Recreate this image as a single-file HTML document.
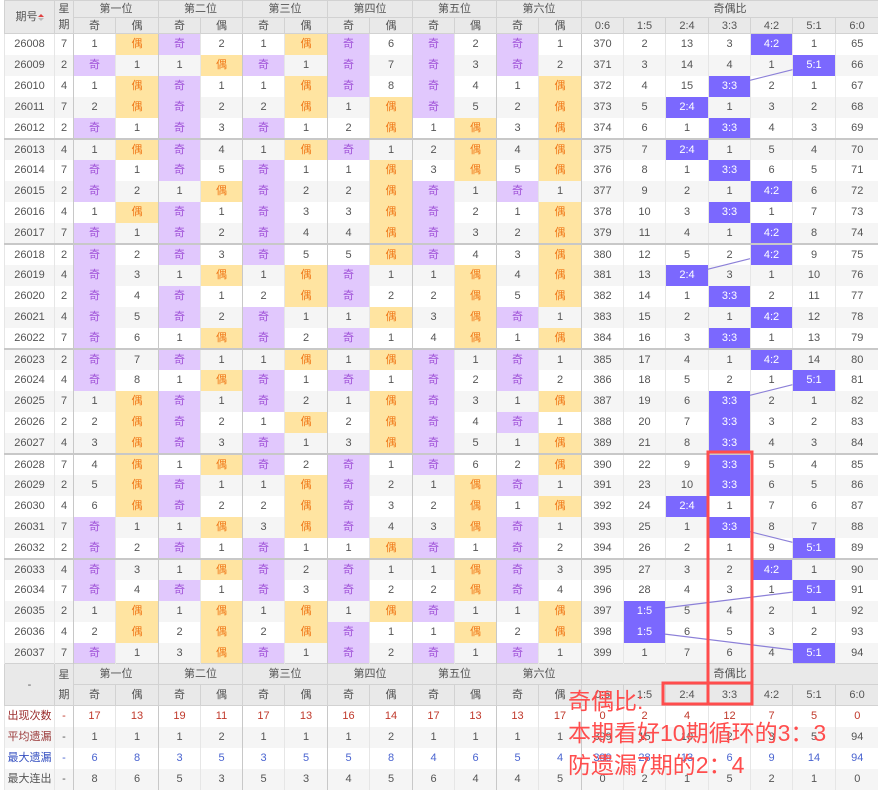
<!DOCTYPE html>
<html><head><meta charset="utf-8">
<style>
*{box-sizing:border-box}
body{margin:0;width:878px;height:787px;overflow:hidden;background:#fff;position:relative;font-family:"Liberation Sans","Noto Sans CJK SC",sans-serif}
table{position:absolute;left:4px;top:0;border-collapse:collapse;table-layout:fixed;width:874px;font-size:11px;color:#555;text-align:center}
td{padding:0;height:21px;border-left:1px solid #e6e6e6;overflow:hidden;white-space:nowrap;line-height:12px}
tr.d td{height:21px}
tr.d:nth-child(even) td{background:#f5f5f5}
tr.g td{border-top:2px solid #c8c8c8}
.hd td{background:#e9e9e9;color:#555;border:1px solid #d2d2d2;font-size:11px}
.h1 td{height:17px}.h2 td{height:16px}
td.p{border-left:1px solid #c8c8c8}
td.o{background:#e1c8fd !important;color:#a052d8}
td.e{background:#ffe4a1 !important;color:#f07a1a}
td.h{background:#7b68fe !important;color:#fff}
.f1 td{height:21px}
.s td{height:21px}
.s:nth-child(even) td{background:#f5f5f5}
.r td{color:#c0392b}.r td.l{color:#9b2b2b}
.a td.l{color:#9b3b3b}
.b td{color:#4a64d0}.b td.l{color:#3550c0}
.arr{display:inline-block;width:6px;vertical-align:middle;line-height:0}
</style></head><body>
<table>
<colgroup><col style="width:50px"><col style="width:19px">
<col style="width:42px"><col style="width:43px"><col style="width:42px"><col style="width:42px"><col style="width:42px"><col style="width:43px"><col style="width:42px"><col style="width:43px"><col style="width:42px"><col style="width:42px"><col style="width:42px"><col style="width:43px">
<col style="width:42px"><col style="width:42px"><col style="width:43px"><col style="width:42px"><col style="width:42px"><col style="width:43px"><col style="width:43px"></colgroup>
<tbody>
<tr class="hd h1"><td rowspan="2">期号<span class="arr"><svg width="6" height="9"><path d="M0 4 L3 1 L6 4Z" fill="#e04040"/><path d="M0 5 L3 8 L6 5Z" fill="#bbb"/></svg></span></td><td rowspan="2" style="line-height:16px">星<br>期</td><td colspan="2">第一位</td><td colspan="2">第二位</td><td colspan="2">第三位</td><td colspan="2">第四位</td><td colspan="2">第五位</td><td colspan="2">第六位</td><td colspan="7">奇偶比</td></tr>
<tr class="hd h2"><td>奇</td><td>偶</td><td>奇</td><td>偶</td><td>奇</td><td>偶</td><td>奇</td><td>偶</td><td>奇</td><td>偶</td><td>奇</td><td>偶</td><td>0:6</td><td>1:5</td><td>2:4</td><td>3:3</td><td>4:2</td><td>5:1</td><td>6:0</td></tr>
</tbody>
<tbody>
<tr class="d"><td>26008</td><td>7</td><td class="p">1</td><td class="e">偶</td><td class="p o">奇</td><td>2</td><td class="p">1</td><td class="e">偶</td><td class="p o">奇</td><td>6</td><td class="p o">奇</td><td>2</td><td class="p o">奇</td><td>1</td><td class="p">370</td><td>2</td><td>13</td><td>3</td><td class="h">4:2</td><td>1</td><td>65</td></tr>
<tr class="d"><td>26009</td><td>2</td><td class="p o">奇</td><td>1</td><td class="p">1</td><td class="e">偶</td><td class="p o">奇</td><td>1</td><td class="p o">奇</td><td>7</td><td class="p o">奇</td><td>3</td><td class="p o">奇</td><td>2</td><td class="p">371</td><td>3</td><td>14</td><td>4</td><td>1</td><td class="h">5:1</td><td>66</td></tr>
<tr class="d"><td>26010</td><td>4</td><td class="p">1</td><td class="e">偶</td><td class="p o">奇</td><td>1</td><td class="p">1</td><td class="e">偶</td><td class="p o">奇</td><td>8</td><td class="p o">奇</td><td>4</td><td class="p">1</td><td class="e">偶</td><td class="p">372</td><td>4</td><td>15</td><td class="h">3:3</td><td>2</td><td>1</td><td>67</td></tr>
<tr class="d"><td>26011</td><td>7</td><td class="p">2</td><td class="e">偶</td><td class="p o">奇</td><td>2</td><td class="p">2</td><td class="e">偶</td><td class="p">1</td><td class="e">偶</td><td class="p o">奇</td><td>5</td><td class="p">2</td><td class="e">偶</td><td class="p">373</td><td>5</td><td class="h">2:4</td><td>1</td><td>3</td><td>2</td><td>68</td></tr>
<tr class="d"><td>26012</td><td>2</td><td class="p o">奇</td><td>1</td><td class="p o">奇</td><td>3</td><td class="p o">奇</td><td>1</td><td class="p">2</td><td class="e">偶</td><td class="p">1</td><td class="e">偶</td><td class="p">3</td><td class="e">偶</td><td class="p">374</td><td>6</td><td>1</td><td class="h">3:3</td><td>4</td><td>3</td><td>69</td></tr>
<tr class="d g"><td>26013</td><td>4</td><td class="p">1</td><td class="e">偶</td><td class="p o">奇</td><td>4</td><td class="p">1</td><td class="e">偶</td><td class="p o">奇</td><td>1</td><td class="p">2</td><td class="e">偶</td><td class="p">4</td><td class="e">偶</td><td class="p">375</td><td>7</td><td class="h">2:4</td><td>1</td><td>5</td><td>4</td><td>70</td></tr>
<tr class="d"><td>26014</td><td>7</td><td class="p o">奇</td><td>1</td><td class="p o">奇</td><td>5</td><td class="p o">奇</td><td>1</td><td class="p">1</td><td class="e">偶</td><td class="p">3</td><td class="e">偶</td><td class="p">5</td><td class="e">偶</td><td class="p">376</td><td>8</td><td>1</td><td class="h">3:3</td><td>6</td><td>5</td><td>71</td></tr>
<tr class="d"><td>26015</td><td>2</td><td class="p o">奇</td><td>2</td><td class="p">1</td><td class="e">偶</td><td class="p o">奇</td><td>2</td><td class="p">2</td><td class="e">偶</td><td class="p o">奇</td><td>1</td><td class="p o">奇</td><td>1</td><td class="p">377</td><td>9</td><td>2</td><td>1</td><td class="h">4:2</td><td>6</td><td>72</td></tr>
<tr class="d"><td>26016</td><td>4</td><td class="p">1</td><td class="e">偶</td><td class="p o">奇</td><td>1</td><td class="p o">奇</td><td>3</td><td class="p">3</td><td class="e">偶</td><td class="p o">奇</td><td>2</td><td class="p">1</td><td class="e">偶</td><td class="p">378</td><td>10</td><td>3</td><td class="h">3:3</td><td>1</td><td>7</td><td>73</td></tr>
<tr class="d"><td>26017</td><td>7</td><td class="p o">奇</td><td>1</td><td class="p o">奇</td><td>2</td><td class="p o">奇</td><td>4</td><td class="p">4</td><td class="e">偶</td><td class="p o">奇</td><td>3</td><td class="p">2</td><td class="e">偶</td><td class="p">379</td><td>11</td><td>4</td><td>1</td><td class="h">4:2</td><td>8</td><td>74</td></tr>
<tr class="d g"><td>26018</td><td>2</td><td class="p o">奇</td><td>2</td><td class="p o">奇</td><td>3</td><td class="p o">奇</td><td>5</td><td class="p">5</td><td class="e">偶</td><td class="p o">奇</td><td>4</td><td class="p">3</td><td class="e">偶</td><td class="p">380</td><td>12</td><td>5</td><td>2</td><td class="h">4:2</td><td>9</td><td>75</td></tr>
<tr class="d"><td>26019</td><td>4</td><td class="p o">奇</td><td>3</td><td class="p">1</td><td class="e">偶</td><td class="p">1</td><td class="e">偶</td><td class="p o">奇</td><td>1</td><td class="p">1</td><td class="e">偶</td><td class="p">4</td><td class="e">偶</td><td class="p">381</td><td>13</td><td class="h">2:4</td><td>3</td><td>1</td><td>10</td><td>76</td></tr>
<tr class="d"><td>26020</td><td>2</td><td class="p o">奇</td><td>4</td><td class="p o">奇</td><td>1</td><td class="p">2</td><td class="e">偶</td><td class="p o">奇</td><td>2</td><td class="p">2</td><td class="e">偶</td><td class="p">5</td><td class="e">偶</td><td class="p">382</td><td>14</td><td>1</td><td class="h">3:3</td><td>2</td><td>11</td><td>77</td></tr>
<tr class="d"><td>26021</td><td>4</td><td class="p o">奇</td><td>5</td><td class="p o">奇</td><td>2</td><td class="p o">奇</td><td>1</td><td class="p">1</td><td class="e">偶</td><td class="p">3</td><td class="e">偶</td><td class="p o">奇</td><td>1</td><td class="p">383</td><td>15</td><td>2</td><td>1</td><td class="h">4:2</td><td>12</td><td>78</td></tr>
<tr class="d"><td>26022</td><td>7</td><td class="p o">奇</td><td>6</td><td class="p">1</td><td class="e">偶</td><td class="p o">奇</td><td>2</td><td class="p o">奇</td><td>1</td><td class="p">4</td><td class="e">偶</td><td class="p">1</td><td class="e">偶</td><td class="p">384</td><td>16</td><td>3</td><td class="h">3:3</td><td>1</td><td>13</td><td>79</td></tr>
<tr class="d g"><td>26023</td><td>2</td><td class="p o">奇</td><td>7</td><td class="p o">奇</td><td>1</td><td class="p">1</td><td class="e">偶</td><td class="p">1</td><td class="e">偶</td><td class="p o">奇</td><td>1</td><td class="p o">奇</td><td>1</td><td class="p">385</td><td>17</td><td>4</td><td>1</td><td class="h">4:2</td><td>14</td><td>80</td></tr>
<tr class="d"><td>26024</td><td>4</td><td class="p o">奇</td><td>8</td><td class="p">1</td><td class="e">偶</td><td class="p o">奇</td><td>1</td><td class="p o">奇</td><td>1</td><td class="p o">奇</td><td>2</td><td class="p o">奇</td><td>2</td><td class="p">386</td><td>18</td><td>5</td><td>2</td><td>1</td><td class="h">5:1</td><td>81</td></tr>
<tr class="d"><td>26025</td><td>7</td><td class="p">1</td><td class="e">偶</td><td class="p o">奇</td><td>1</td><td class="p o">奇</td><td>2</td><td class="p">1</td><td class="e">偶</td><td class="p o">奇</td><td>3</td><td class="p">1</td><td class="e">偶</td><td class="p">387</td><td>19</td><td>6</td><td class="h">3:3</td><td>2</td><td>1</td><td>82</td></tr>
<tr class="d"><td>26026</td><td>2</td><td class="p">2</td><td class="e">偶</td><td class="p o">奇</td><td>2</td><td class="p">1</td><td class="e">偶</td><td class="p">2</td><td class="e">偶</td><td class="p o">奇</td><td>4</td><td class="p o">奇</td><td>1</td><td class="p">388</td><td>20</td><td>7</td><td class="h">3:3</td><td>3</td><td>2</td><td>83</td></tr>
<tr class="d"><td>26027</td><td>4</td><td class="p">3</td><td class="e">偶</td><td class="p o">奇</td><td>3</td><td class="p o">奇</td><td>1</td><td class="p">3</td><td class="e">偶</td><td class="p o">奇</td><td>5</td><td class="p">1</td><td class="e">偶</td><td class="p">389</td><td>21</td><td>8</td><td class="h">3:3</td><td>4</td><td>3</td><td>84</td></tr>
<tr class="d g"><td>26028</td><td>7</td><td class="p">4</td><td class="e">偶</td><td class="p">1</td><td class="e">偶</td><td class="p o">奇</td><td>2</td><td class="p o">奇</td><td>1</td><td class="p o">奇</td><td>6</td><td class="p">2</td><td class="e">偶</td><td class="p">390</td><td>22</td><td>9</td><td class="h">3:3</td><td>5</td><td>4</td><td>85</td></tr>
<tr class="d"><td>26029</td><td>2</td><td class="p">5</td><td class="e">偶</td><td class="p o">奇</td><td>1</td><td class="p">1</td><td class="e">偶</td><td class="p o">奇</td><td>2</td><td class="p">1</td><td class="e">偶</td><td class="p o">奇</td><td>1</td><td class="p">391</td><td>23</td><td>10</td><td class="h">3:3</td><td>6</td><td>5</td><td>86</td></tr>
<tr class="d"><td>26030</td><td>4</td><td class="p">6</td><td class="e">偶</td><td class="p o">奇</td><td>2</td><td class="p">2</td><td class="e">偶</td><td class="p o">奇</td><td>3</td><td class="p">2</td><td class="e">偶</td><td class="p">1</td><td class="e">偶</td><td class="p">392</td><td>24</td><td class="h">2:4</td><td>1</td><td>7</td><td>6</td><td>87</td></tr>
<tr class="d"><td>26031</td><td>7</td><td class="p o">奇</td><td>1</td><td class="p">1</td><td class="e">偶</td><td class="p">3</td><td class="e">偶</td><td class="p o">奇</td><td>4</td><td class="p">3</td><td class="e">偶</td><td class="p o">奇</td><td>1</td><td class="p">393</td><td>25</td><td>1</td><td class="h">3:3</td><td>8</td><td>7</td><td>88</td></tr>
<tr class="d"><td>26032</td><td>2</td><td class="p o">奇</td><td>2</td><td class="p o">奇</td><td>1</td><td class="p o">奇</td><td>1</td><td class="p">1</td><td class="e">偶</td><td class="p o">奇</td><td>1</td><td class="p o">奇</td><td>2</td><td class="p">394</td><td>26</td><td>2</td><td>1</td><td>9</td><td class="h">5:1</td><td>89</td></tr>
<tr class="d g"><td>26033</td><td>4</td><td class="p o">奇</td><td>3</td><td class="p">1</td><td class="e">偶</td><td class="p o">奇</td><td>2</td><td class="p o">奇</td><td>1</td><td class="p">1</td><td class="e">偶</td><td class="p o">奇</td><td>3</td><td class="p">395</td><td>27</td><td>3</td><td>2</td><td class="h">4:2</td><td>1</td><td>90</td></tr>
<tr class="d"><td>26034</td><td>7</td><td class="p o">奇</td><td>4</td><td class="p o">奇</td><td>1</td><td class="p o">奇</td><td>3</td><td class="p o">奇</td><td>2</td><td class="p">2</td><td class="e">偶</td><td class="p o">奇</td><td>4</td><td class="p">396</td><td>28</td><td>4</td><td>3</td><td>1</td><td class="h">5:1</td><td>91</td></tr>
<tr class="d"><td>26035</td><td>2</td><td class="p">1</td><td class="e">偶</td><td class="p">1</td><td class="e">偶</td><td class="p">1</td><td class="e">偶</td><td class="p">1</td><td class="e">偶</td><td class="p o">奇</td><td>1</td><td class="p">1</td><td class="e">偶</td><td class="p">397</td><td class="h">1:5</td><td>5</td><td>4</td><td>2</td><td>1</td><td>92</td></tr>
<tr class="d"><td>26036</td><td>4</td><td class="p">2</td><td class="e">偶</td><td class="p">2</td><td class="e">偶</td><td class="p">2</td><td class="e">偶</td><td class="p o">奇</td><td>1</td><td class="p">1</td><td class="e">偶</td><td class="p">2</td><td class="e">偶</td><td class="p">398</td><td class="h">1:5</td><td>6</td><td>5</td><td>3</td><td>2</td><td>93</td></tr>
<tr class="d"><td>26037</td><td>7</td><td class="p o">奇</td><td>1</td><td class="p">3</td><td class="e">偶</td><td class="p o">奇</td><td>1</td><td class="p o">奇</td><td>2</td><td class="p o">奇</td><td>1</td><td class="p o">奇</td><td>1</td><td class="p">399</td><td>1</td><td>7</td><td>6</td><td>4</td><td class="h">5:1</td><td>94</td></tr>
</tbody>
<tbody>
<tr class="hd f1"><td rowspan="2">-</td><td rowspan="2" style="line-height:20px">星<br>期</td><td colspan="2">第一位</td><td colspan="2">第二位</td><td colspan="2">第三位</td><td colspan="2">第四位</td><td colspan="2">第五位</td><td colspan="2">第六位</td><td colspan="7">奇偶比</td></tr>
<tr class="hd f1"><td>奇</td><td>偶</td><td>奇</td><td>偶</td><td>奇</td><td>偶</td><td>奇</td><td>偶</td><td>奇</td><td>偶</td><td>奇</td><td>偶</td><td>0:6</td><td>1:5</td><td>2:4</td><td>3:3</td><td>4:2</td><td>5:1</td><td>6:0</td></tr>
</tbody>
<tbody>
<tr class="s r"><td class="l">出现次数</td><td>-</td><td class="p">17</td><td>13</td><td class="p">19</td><td>11</td><td class="p">17</td><td>13</td><td class="p">16</td><td>14</td><td class="p">17</td><td>13</td><td class="p">13</td><td>17</td><td class="p">0</td><td>2</td><td>4</td><td>12</td><td>7</td><td>5</td><td>0</td></tr>
<tr class="s a"><td class="l">平均遗漏</td><td>-</td><td class="p">1</td><td>1</td><td class="p">1</td><td>2</td><td class="p">1</td><td>1</td><td class="p">1</td><td>2</td><td class="p">1</td><td>1</td><td class="p">1</td><td>1</td><td class="p">399</td><td>15</td><td>10</td><td>2</td><td>3</td><td>5</td><td>94</td></tr>
<tr class="s b"><td class="l">最大遗漏</td><td>-</td><td class="p">6</td><td>8</td><td class="p">3</td><td>5</td><td class="p">3</td><td>5</td><td class="p">5</td><td>8</td><td class="p">4</td><td>6</td><td class="p">5</td><td>4</td><td class="p">399</td><td>28</td><td>13</td><td>6</td><td>9</td><td>14</td><td>94</td></tr>
<tr class="s"><td class="l">最大连出</td><td>-</td><td class="p">8</td><td>6</td><td class="p">5</td><td>3</td><td class="p">5</td><td>3</td><td class="p">4</td><td>5</td><td class="p">6</td><td>4</td><td class="p">4</td><td>5</td><td class="p">0</td><td>2</td><td>1</td><td>5</td><td>2</td><td>1</td><td>0</td></tr>
</tbody>
</table>
<svg width="878" height="787" style="position:absolute;left:0;top:0" xmlns="http://www.w3.org/2000/svg">
<g stroke="#8c80d8" stroke-width="1.2">
<line x1="792.5" y1="69.7" x2="750" y2="80.3"/>
<line x1="750" y1="258.7" x2="707.5" y2="269.3"/>
<line x1="792.5" y1="384.7" x2="750" y2="395.3"/>
<line x1="750" y1="531.7" x2="792.5" y2="542.3"/>
<line x1="792.5" y1="592.1" x2="665" y2="607.9"/>
<line x1="665" y1="634.1" x2="792.5" y2="649.9"/>
</g>
<g fill="none" stroke="#ff4d4d" stroke-width="3">
<path d="M708,704 V452 H752 V704"/>
<rect x="663" y="683" width="89" height="21"/>
</g>
<g fill="#ff4d4d" font-family="Liberation Sans,Noto Sans CJK SC,sans-serif" font-size="23">
<text x="568" y="709">奇偶比:</text>
<text x="568" y="741">本期看好10期循环的3：3</text>
<text x="568" y="773">防遗漏7期的2：4</text>
</g>
</svg>
</body></html>
